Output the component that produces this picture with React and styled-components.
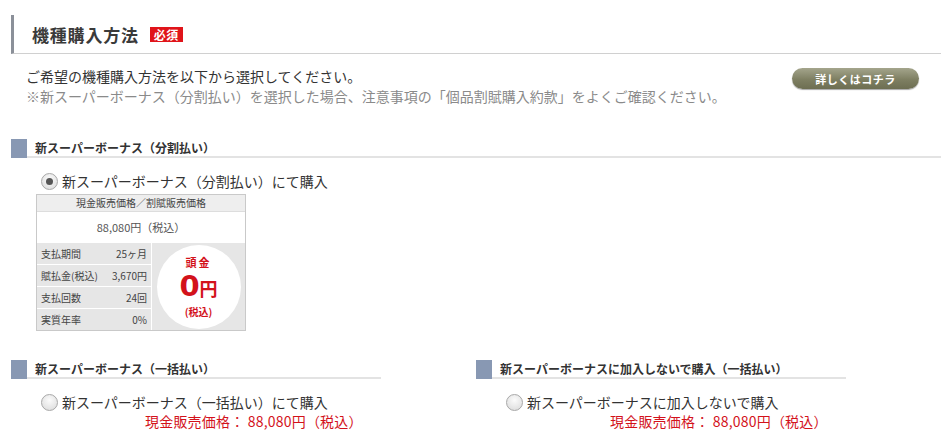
import styled, { createGlobalStyle } from 'styled-components';

const GlobalStyle = createGlobalStyle`
  body {
    margin: 0;
    background: #fff;
    font-family: "Noto Sans CJK JP", "Liberation Sans", sans-serif;
    color: #333;
  }
`;

const Page = styled.div`
  width: 949px;
  padding: 15px 8px 0 11px;
  box-sizing: border-box;
`;

const Header = styled.div`
  display: flex;
  align-items: center;
  gap: 11px;
  height: 38px;
  padding-left: 18px;
  border-left: 3px solid #8b9099;
  border-bottom: 1px solid #d0d0d0;
`;

const Title = styled.h2`
  margin: 0;
  font-size: 17px;
  font-weight: 700;
  color: #3a3a3a;
  letter-spacing: 0.8px;
`;

const Badge = styled.span`
  background: #e0141a;
  color: #fff;
  font-size: 12px;
  font-weight: 700;
  line-height: 15px;
  padding: 0 4px;
  letter-spacing: 0.5px;
`;

const Intro = styled.div`
  display: flex;
  justify-content: space-between;
  padding: 12px 22px 0 15px;
`;

const IntroText = styled.div`
  font-size: 14px;
  line-height: 20px;
`;

const Note = styled.div`
  color: ${(p) => (p.muted ? '#8a8a8a' : '#333')};
`;

const MoreButton = styled.button`
  width: 127px;
  height: 21px;
  margin-top: 2px;
  border: none;
  border-radius: 11px;
  background: linear-gradient(#a4a58c, #7e7f62 55%, #6d6e52);
  box-shadow: 0 1px 1px rgba(0, 0, 0, 0.35);
  color: #fff;
  font-family: inherit;
  font-size: 11px;
  font-weight: 700;
  letter-spacing: 0.5px;
  padding: 0;
`;

const Section = styled.div`
  width: ${(p) => p.width || 'auto'};
`;

const SectionHead = styled.div`
  display: flex;
  align-items: center;
  gap: 8px;
  height: 17px;
  border-bottom: 2px solid #e3e3e3;
  font-size: 12px;
  font-weight: 700;
  color: #333;
  &::before {
    content: '';
    width: 16px;
    height: 19px;
    margin-bottom: -2px;
    background: #8898b3;
  }
`;

const Option = styled.label`
  display: flex;
  align-items: center;
  gap: 4px;
  margin: 13px 0 0 30px;
  font-size: 14px;
  color: #333;
`;

const Radio = styled.span`
  width: 15px;
  height: 15px;
  border-radius: 50%;
  border: 1px solid #a8a8a8;
  background: radial-gradient(circle at 50% 35%, #fbfbfb, #d9d9d9);
  display: flex;
  align-items: center;
  justify-content: center;
  &::after {
    content: '';
    display: ${(p) => (p.checked ? 'block' : 'none')};
    width: 7px;
    height: 7px;
    border-radius: 50%;
    background: #555;
  }
`;

const PriceBox = styled.div`
  width: 208px;
  margin: 3px 0 0 25px;
  border: 1px solid #c9c9c9;
  font-size: 10px;
  color: #444;
`;

const BoxHead = styled.div`
  height: 16px;
  line-height: 16px;
  text-align: center;
  background: #eeeeee;
  border-bottom: 1px solid #ddd;
`;

const BoxPrice = styled.div`
  height: 31px;
  line-height: 30px;
  text-align: center;
  font-size: 11px;
  color: #555;
  background: #fff;
`;

const BoxBody = styled.div`
  display: grid;
  grid-template-columns: 115px 1fr;
  background: #e6e6e6;
`;

const Rows = styled.div`
  display: flex;
  flex-direction: column;
  border-right: 1px solid #fff;
`;

const Row = styled.div`
  display: flex;
  justify-content: space-between;
  align-items: center;
  height: 21px;
  padding: 0 4px;
  border-top: ${(p) => (p.first ? 'none' : '1px solid #fff')};
`;

const CircleCell = styled.div`
  display: flex;
  align-items: center;
  justify-content: center;
`;

const Circle = styled.div`
  width: 84px;
  height: 84px;
  border-radius: 50%;
  background: #fff;
  display: flex;
  flex-direction: column;
  align-items: center;
  justify-content: center;
  color: #d3121b;
  font-weight: 700;
`;

const Down = styled.div`
  font-size: 11px;
  letter-spacing: 2px;
  line-height: 14px;
`;

const Zero = styled.div`
  display: flex;
  align-items: baseline;
  line-height: 34px;
  font-family: "DejaVu Sans", sans-serif;
  font-size: 29px;
  span {
    font-family: "Noto Sans CJK JP", sans-serif;
    font-size: 18px;
  }
`;

const Tax = styled.div`
  font-size: 10px;
  line-height: 14px;
`;

const Columns = styled.div`
  display: flex;
  gap: 95px;
  margin-top: 29px;
`;

const CashPrice = styled.div`
  margin: -1px 0 0 ${(p) => p.indent}px;
  font-size: 14px;
  color: #d3121b;
  letter-spacing: 0.2px;
`;

const rows = [
  ['支払期間', '25ヶ月'],
  ['賦払金(税込)', '3,670円'],
  ['支払回数', '24回'],
  ['実質年率', '0%'],
];

export default function App() {
  return (
    <Page>
      <GlobalStyle />
      <Header>
        <Title>機種購入方法</Title>
        <Badge>必須</Badge>
      </Header>
      <Intro>
        <IntroText>
          <Note>ご希望の機種購入方法を以下から選択してください。</Note>
          <Note muted>
            ※新スーパーボーナス（分割払い）を選択した場合、注意事項の「個品割賦購入約款」をよくご確認ください。
          </Note>
        </IntroText>
        <MoreButton>詳しくはコチラ</MoreButton>
      </Intro>

      <Section style={{ marginTop: 33 }}>
        <SectionHead>新スーパーボーナス（分割払い）</SectionHead>
        <Option>
          <Radio checked />
          新スーパーボーナス（分割払い）にて購入
        </Option>
        <PriceBox>
          <BoxHead>現金販売価格／割賦販売価格</BoxHead>
          <BoxPrice>88,080円（税込）</BoxPrice>
          <BoxBody>
            <Rows>
              {rows.map(([k, v], i) => (
                <Row key={k} first={i === 0}>
                  <span>{k}</span>
                  <span>{v}</span>
                </Row>
              ))}
            </Rows>
            <CircleCell>
              <Circle>
                <Down>頭金</Down>
                <Zero>
                  0<span>円</span>
                </Zero>
                <Tax>(税込)</Tax>
              </Circle>
            </CircleCell>
          </BoxBody>
        </PriceBox>
      </Section>

      <Columns>
        <Section width="370px">
          <SectionHead>新スーパーボーナス（一括払い）</SectionHead>
          <Option>
            <Radio />
            新スーパーボーナス（一括払い）にて購入
          </Option>
          <CashPrice indent={134}>現金販売価格： 88,080円（税込）</CashPrice>
        </Section>
        <Section width="370px">
          <SectionHead>新スーパーボーナスに加入しないで購入（一括払い）</SectionHead>
          <Option>
            <Radio />
            新スーパーボーナスに加入しないで購入
          </Option>
          <CashPrice indent={134}>現金販売価格： 88,080円（税込）</CashPrice>
        </Section>
      </Columns>
    </Page>
  );
}
